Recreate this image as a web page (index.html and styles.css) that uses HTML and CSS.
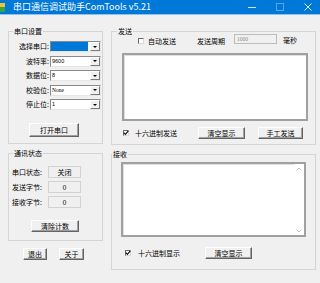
FILE: index.html
```html
<!DOCTYPE html>
<html>
<head>
<meta charset="utf-8">
<link rel="stylesheet" href="styles.css">
</head>
<body>
<div class="win">
  <div class="titlebar">
    <svg class="appicon" width="5" height="9" viewBox="0 0 5 9"><rect x="0" y="0" width="5" height="4" fill="#e8c832"/><rect x="0" y="4" width="5" height="5" fill="#3aa34a"/></svg>
    <span class="title">串口通信调试助手ComTools v5.21</span>
    <div class="caps">
      <svg class="cap cap-min" width="8" height="8" viewBox="0 0 8 8"><line x1="0" y1="4.5" x2="8" y2="4.5" stroke="#cfe3f6" stroke-width="1"/></svg>
      <svg class="cap cap-max" width="8" height="8" viewBox="0 0 8 8"><rect x="0.5" y="0.5" width="7" height="7" fill="none" stroke="#5aa3e6" stroke-width="1"/></svg>
      <svg class="cap cap-close" width="8" height="8" viewBox="0 0 8 8"><path d="M0.5 0.5 L7.5 7.5 M7.5 0.5 L0.5 7.5" stroke="#dfeefa" stroke-width="1"/></svg>
    </div>
  </div>
  <div class="body">
    <div class="left">
      <div class="group g-port">
        <span class="legend">串口设置</span>
        <div class="form">
          <span class="lbl">选择串口:</span>
          <div class="combo sel"><span class="val"></span><span class="drop"><i></i></span></div>
          <span class="lbl">波特率:</span>
          <div class="combo"><span class="val">9600</span><span class="drop"><i></i></span></div>
          <span class="lbl">数据位:</span>
          <div class="combo"><span class="val">8</span><span class="drop"><i></i></span></div>
          <span class="lbl">校验位:</span>
          <div class="combo"><span class="val serif">None</span><span class="drop"><i></i></span></div>
          <span class="lbl">停止位:</span>
          <div class="combo"><span class="val">1</span><span class="drop"><i></i></span></div>
        </div>
        <button class="btn btn-open">打开串口</button>
      </div>
      <div class="group g-stat">
        <span class="legend">通讯状态</span>
        <div class="stats">
          <span class="lbl2">串口状态:</span><span class="vbox">关闭</span>
          <span class="lbl2">发送字节:</span><span class="vbox">0</span>
          <span class="lbl2">接收字节:</span><span class="vbox">0</span>
        </div>
        <button class="btn btn-clear">清除计数</button>
      </div>
      <div class="bottom-btns">
        <button class="btn btn-exit">退出</button>
        <button class="btn btn-about">关于</button>
      </div>
    </div>
    <div class="right">
      <div class="group g-send">
        <span class="legend legend-send">发送</span>
        <div class="send-top">
          <span class="chk chk-auto"></span>
          <span class="txt">自动发送</span>
          <span class="txt period">发送周期</span>
          <span class="input-dis">1000</span>
          <span class="txt ms">毫秒</span>
        </div>
        <div class="textarea ta-send"></div>
        <div class="send-bottom">
          <span class="chk chk-hexsend checked"><svg width="6" height="6" viewBox="0 0 6 6"><path d="M0.8 2.6 L2.4 4.3 L5.3 0.9" fill="none" stroke="#111" stroke-width="1.2"/></svg></span>
          <span class="txt">十六进制发送</span>
          <button class="btn btn-sclear">清空显示</button>
          <button class="btn btn-manual">手工发送</button>
        </div>
      </div>
      <div class="group g-recv">
        <span class="legend legend-recv">接收</span>
        <div class="textarea ta-recv">
          <div class="vscroll">
            <svg width="6" height="4" viewBox="0 0 6 4"><path d="M0.5 3.5 L3 1 L5.5 3.5" fill="none" stroke="#c4c4c4" stroke-width="1"/></svg>
            <svg width="6" height="4" viewBox="0 0 6 4"><path d="M0.5 0.5 L3 3 L5.5 0.5" fill="none" stroke="#c4c4c4" stroke-width="1"/></svg>
          </div>
        </div>
        <div class="recv-bottom">
          <span class="chk chk-hexshow checked"><svg width="6" height="6" viewBox="0 0 6 6"><path d="M0.8 2.6 L2.4 4.3 L5.3 0.9" fill="none" stroke="#111" stroke-width="1.2"/></svg></span>
          <span class="txt">十六进制显示</span>
          <button class="btn btn-rclear">清空显示</button>
        </div>
      </div>
    </div>
  </div>
</div>
</body>
</html>
```
FILE: styles.css
```css
* { box-sizing: border-box; }
html, body { margin: 0; padding: 0; }
body {
  width: 320px;
  height: 283px;
  overflow: hidden;
  background: #f0f0f0;
  font-family: "Noto Sans CJK SC", "Noto Sans", sans-serif;
  font-size: 7px;
  line-height: 10px;
  color: #000;
}
.win { width: 320px; height: 283px; background: #f0f0f0; }

.titlebar {
  height: 15px;
  background: #0078d7;
  border-bottom: 1px solid #8fc3ee;
  display: flex;
  align-items: center;
  color: #fff;
}
.appicon { display: block; margin-left: 0; margin-top: 0; }
.title {
  margin-left: 8px;
  font-size: 9px;
  line-height: 12px;
  white-space: nowrap;
}
.caps { margin-left: auto; display: flex; align-items: center; height: 14px; }
.cap { display: block; }
.cap-min { margin-right: 20px; }
.cap-max { margin-right: 20px; }
.cap-close { margin-right: 8px; }

.body { display: flex; padding-left: 8px; }
.left { width: 95px; display: flex; flex-direction: column; }
.right { width: 205px; margin-left: 8px; display: flex; flex-direction: column; }

.group {
  position: relative;
  border: 1px solid #d5d5d5;
}
.legend {
  position: absolute;
  top: -6px;
  left: 4px;
  padding: 0 1px;
  background: #f0f0f0;
  line-height: 10px;
  white-space: nowrap;
}
.legend-send { left: 5px; }
.legend-recv { left: 0px; }

/* port settings */
.g-port { margin-top: 16px; height: 113px; }
.form {
  margin-top: 9px;
  display: grid;
  grid-template-columns: 41px 51px;
  grid-auto-rows: 11px;
  row-gap: 3.5px;
}
.lbl { text-align: right; padding-right: 1px; line-height: 11px; white-space: nowrap; }
.combo {
  display: flex;
  background: #fff;
  border: 1px solid;
  border-color: #8a8a8a #e6e6e6 #e6e6e6 #8a8a8a;
}
.combo .val {
  flex: 1;
  font-family: "Liberation Sans", sans-serif;
  font-size: 5.5px;
  line-height: 9px;
  padding-left: 1px;
}
.combo .val.serif { font-family: "Liberation Serif", serif; }
.combo.sel .val { background: #0078d7; margin: 0 2px 0 0; }
.drop {
  width: 10px;
  background: #f0f0f0;
  border: 1px solid;
  border-color: #fff #7a7a7a #7a7a7a #fff;
  display: flex;
  align-items: center;
  justify-content: center;
}
.drop i {
  display: block;
  width: 0; height: 0;
  border-left: 2px solid transparent;
  border-right: 2px solid transparent;
  border-top: 2px solid #000;
}

.btn {
  display: block;
  padding: 0;
  margin: 0;
  font-family: "Noto Sans CJK SC", "Noto Sans", sans-serif;
  font-size: 7px;
  line-height: 10px;
  color: #000;
  background: #f0f0f0;
  border: 1px solid;
  border-color: #fff #646464 #646464 #fff;
  box-shadow: inset -1px -1px 0 #a0a0a0;
  text-align: center;
}
.btn-open { margin-top: 13px; margin-left: 20px; width: 50px; height: 14px; }

/* status */
.g-stat { margin-top: 9px; height: 88px; }
.stats {
  margin-top: 12px;
  padding-left: 3px;
  display: grid;
  grid-template-columns: 36px 33px;
  grid-auto-rows: 12px;
  row-gap: 3px;
}
.lbl2 { line-height: 12px; white-space: nowrap; }
.vbox {
  border: 1px solid #d2d2d2;
  text-align: center;
  line-height: 10px;
}
.btn-clear { margin-top: 12px; margin-left: 22px; width: 48px; height: 12px; }

.bottom-btns { display: flex; margin-top: 7px; margin-left: 15px; gap: 12px; }
.btn-exit { width: 24px; height: 12px; }
.btn-about { width: 25px; height: 12px; }

/* send */
.g-send { margin-top: 16px; height: 114px; }
.send-top {
  margin-top: 2px;
  height: 10px;
  display: flex;
  align-items: center;
}
.chk {
  display: block;
  width: 6px;
  height: 6px;
  background: #fff;
  border: 1px solid;
  border-color: #6a6a6a #d8d8d8 #d8d8d8 #6a6a6a;
  position: relative;
}
.chk svg { position: absolute; left: -1px; top: -1px; }
.txt { white-space: nowrap; line-height: 10px; }
.chk-auto { margin-left: 26px; margin-right: 4px; margin-top: 3px; }
.period { margin-left: 21px; margin-top: 3px; }
.send-top .txt { margin-top: 3px; }
.input-dis {
  margin-left: 9px;
  width: 43px;
  height: 10px;
  border: 1px solid #bcbcbc;
  background: #f0f0f0;
  color: #8a8a8a;
  font-family: "Liberation Serif", serif;
  font-size: 5.5px;
  line-height: 8px;
  padding-left: 2px;
}
.ms { margin-left: 6px; }
.send-top .ms { margin-top: 1px; }

.textarea {
  background: #fff;
  border: 2px solid;
  border-color: #a0a0a0 #a0a0a0 #a0a0a0 #a0a0a0;
  box-shadow: inset 1px 1px 0 #e0e0e0;
}
.ta-send { margin-top: 9px; margin-left: 10px; width: 186px; height: 68px; }
.send-bottom { margin-top: 6px; height: 12px; display: flex; align-items: center; }
.chk-hexsend { margin-left: 11px; margin-right: 6px; }
.btn-sclear { margin-left: 21px; width: 47px; height: 12px; }
.btn-manual { margin-left: 13px; width: 45px; height: 12px; }

/* receive */
.g-recv { margin-top: 9px; height: 116px; }
.ta-recv {
  margin-top: 7px;
  margin-left: 9px;
  width: 185px;
  height: 75px;
  display: flex;
  justify-content: flex-end;
}
.vscroll {
  width: 10px;
  height: 100%;
  background: #fff;
  display: flex;
  flex-direction: column;
  justify-content: space-between;
  align-items: center;
  padding: 3px 0 2px;
}
.vscroll svg { display: block; }
.recv-bottom { margin-top: 10px; height: 12px; display: flex; align-items: center; }
.chk-hexshow { margin-left: 13px; margin-right: 7px; }
.btn-rclear { margin-left: 25px; width: 47px; height: 12px; }
```
